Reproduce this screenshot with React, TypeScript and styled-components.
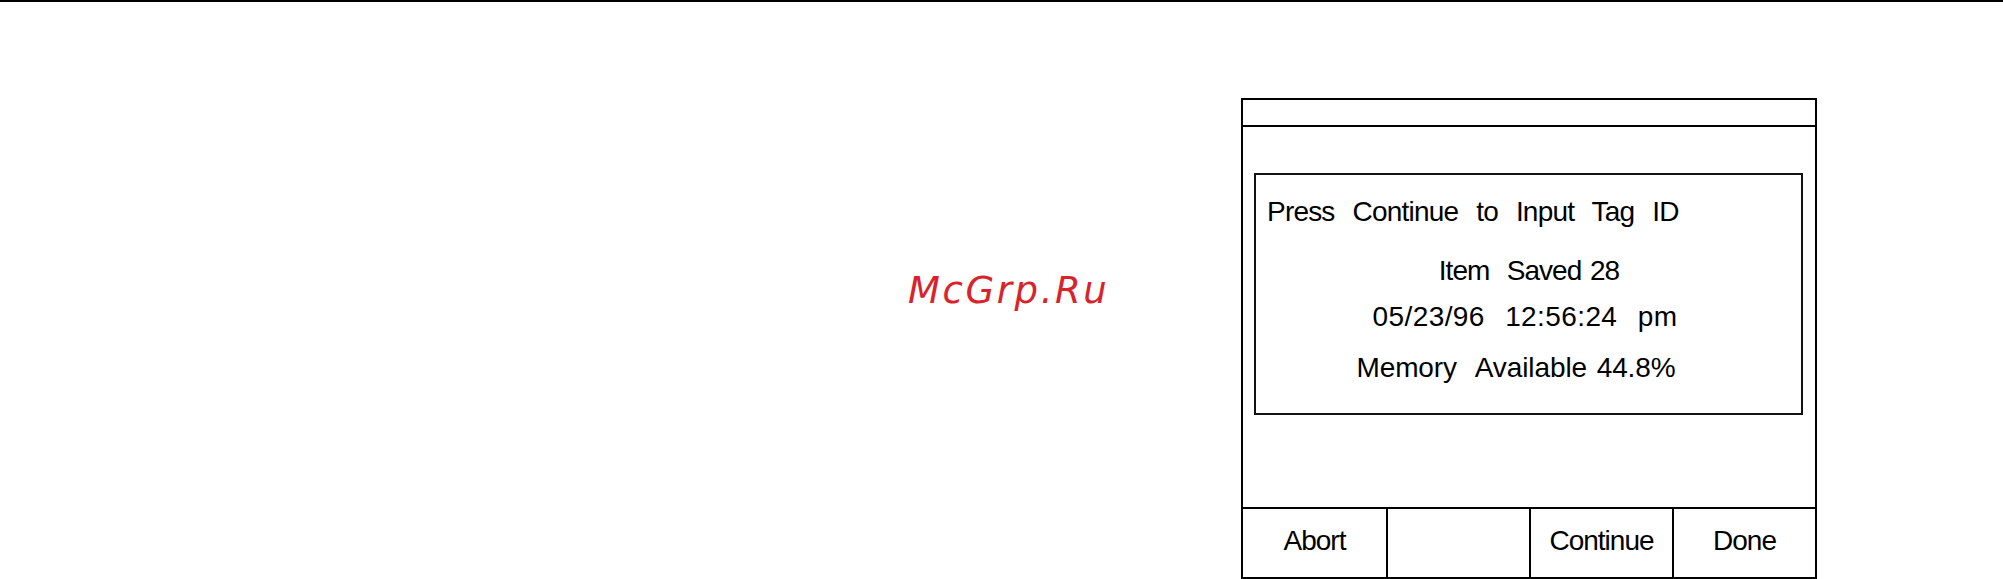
import React from 'react'
import styled, { createGlobalStyle } from 'styled-components'

const GlobalStyle = createGlobalStyle`
  html, body {
    margin: 0;
    padding: 0;
    background: #fff;
  }
  body {
    font-family: "Liberation Sans", Arial, sans-serif;
    color: #000;
  }
`

const Page = styled.div`
  position: relative;
  width: 2003px;
  height: 579px;
  overflow: hidden;
  background: #fff;
`

const TopRule = styled.div`
  height: 0;
  border-top: 2px solid #000;
`

const Stage = styled.div`
  display: flex;
  padding: 96px 0 0 1241px;
`

const Panel = styled.div`
  box-sizing: border-box;
  width: 576px;
  height: 481px;
  border: 2px solid #000;
  display: flex;
  flex-direction: column;
`

const TitleBar = styled.div`
  height: 25px;
  border-bottom: 2px solid #000;
`

const Body = styled.div`
  height: 380px;
  box-sizing: border-box;
  padding: 46px 12px 0 11px;
`

const MessageBox = styled.div`
  box-sizing: border-box;
  height: 242px;
  border: 2px solid #111;
  padding: 16px 10px 0 11px;
  display: flex;
  flex-direction: column;
`

const Line = styled.div<{ $center?: boolean; $gap?: number; $track?: number; $nudge?: number }>`
  font-size: 28px;
  line-height: 41px;
  letter-spacing: ${(p) => (p.$track ?? -1)}px;
  word-spacing: 2px;
  white-space: pre;
  text-align: ${(p) => (p.$center ? 'center' : 'left')};
  margin-bottom: ${(p) => p.$gap || 0}px;
  padding-right: ${(p) => p.$nudge || 0}px;
`

const KeyRow = styled.div`
  display: grid;
  grid-template-columns: repeat(4, 1fr);
  height: 68px;
  border-top: 2px solid #000;
`

const SoftKey = styled.div`
  display: flex;
  align-items: center;
  justify-content: center;
  font-size: 28px;
  letter-spacing: -1px;
  padding-bottom: 4px;
  box-sizing: border-box;
  & + & {
    border-left: 2px solid #000;
  }
`

const Watermark = styled.div`
  position: absolute;
  left: 908px;
  top: 272px;
  font-family: "DejaVu Sans", "Liberation Sans", sans-serif;
  font-style: italic;
  font-size: 37px;
  line-height: 37px;
  letter-spacing: 2.6px;
  color: #d9232b;
`

const keys = ['Abort', '', 'Continue', 'Done']

const App: React.FC = () => {
  return (
    <Page>
      <GlobalStyle />
      <TopRule />
      <Stage>
        <Panel>
          <TitleBar />
          <Body>
            <MessageBox>
              <Line $gap={18} $track={-0.8}>{'Press  Continue  to  Input  Tag  ID'}</Line>
              <Line $center $gap={5}>{'Item  Saved 28'}</Line>
              <Line $center $gap={10} $track={0.4} $nudge={8}>{'05/23/96  12:56:24  pm'}</Line>
              <Line $center $track={-0.1} $nudge={26}>{'Memory  Available 44.8%'}</Line>
            </MessageBox>
          </Body>
          <KeyRow>
            {keys.map((k, i) => (
              <SoftKey key={i}>{k}</SoftKey>
            ))}
          </KeyRow>
        </Panel>
      </Stage>
      <Watermark>McGrp.Ru</Watermark>
    </Page>
  )
}

export default App
